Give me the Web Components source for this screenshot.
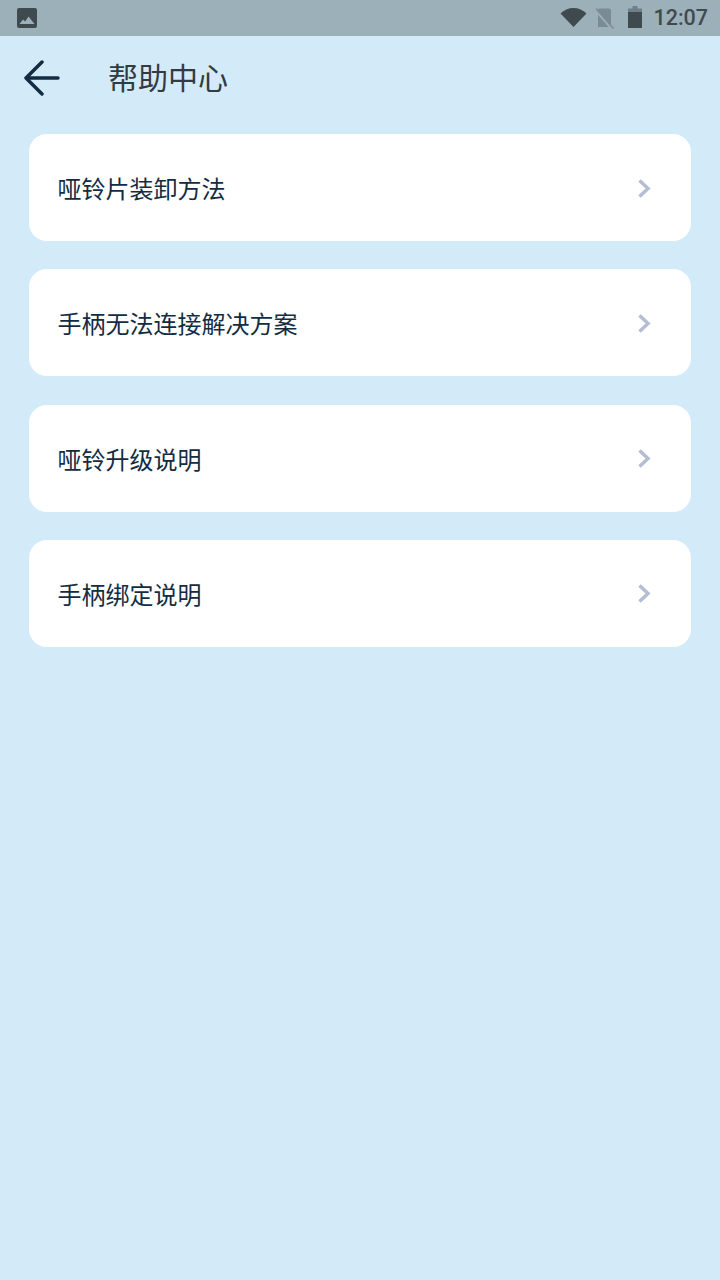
<!DOCTYPE html>
<html lang="zh">
<head>
<meta charset="utf-8">
<title>帮助中心</title>
<style>
    html, body {
        margin: 0;
        height: 100%;
        background-color: #d3ebf9;
        font-family: "Noto Sans CJK SC", "Roboto", sans-serif;
    }
</style>
</head>
<body>
<help-page></help-page>

<script>
class StatusBar extends HTMLElement {
    constructor() {
        super();
        this.shadowDOM = this.attachShadow({ mode: "open" });
        this.shadowDOM.innerHTML = `
            <style>
                :host {
                    display: flex;
                    align-items: center;
                    height: 36px;
                    padding: 0 12px 0 17px;
                    background-color: #9cb0ba;
                    color: #3f4a4f;
                }

                svg {
                    display: block;
                }

                .spacer {
                    flex: 1;
                }

                .wifi {
                    margin: 0 9px 2px 0;
                }

                .sim {
                    margin-right: 14px;
                }

                .battery {
                    margin: 0 11px 2px 0;
                }

                .time {
                    font: 500 21.500px "Roboto", sans-serif;
                    line-height: 36px;
                }
            </style>

            <svg width="20" height="20" viewBox="0 0 20 20">
                <rect x="0" y="0" width="20" height="20" rx="2" fill="#3f4a4f"/>
                <path d="M2.500 16l3.500-4.500 2.200 2 3.300-5 6 7.500z" fill="#9cb0ba"/>
            </svg>
            <span class="spacer"></span>
            <svg class="wifi" width="27" height="20" viewBox="0 0 27 20">
                <path d="M0.500 6.500C4 3 8.500 1 13.500 1s9.500 2 13 5.500L13.500 20z" fill="#3f4a4f"/>
            </svg>
            <svg class="sim" width="18" height="21" viewBox="0 0 18 21">
                <path d="M3.500 0.500h9.500a2 2 0 0 1 2 2v16.500h-13v-17a2 2 0 0 1 1.500-1.500z" fill="#7a8b93"/>
                <path d="M-1 1.500l17.500 20" stroke="#9cb0ba" stroke-width="2.500"/>
                <path d="M0 0.500l17.500 20" stroke="#7a8b93" stroke-width="1.500"/>
            </svg>
            <svg class="battery" width="14" height="22" viewBox="0 0 14 22">
                <path d="M4.500 0h5v2.500h4.500v3.500h-14v-3.500h4.500z" fill="#6f8088"/>
                <path d="M0 6h14v16h-14z" fill="#3f4a4f"/>
            </svg>
            <span class="time">12:07</span>
        `;
    }
}

class TitleBar extends HTMLElement {
    constructor() {
        super();
        this.shadowDOM = this.attachShadow({ mode: "open" });
        this.shadowDOM.innerHTML = `
            <style>
                :host {
                    display: flex;
                    align-items: center;
                    height: 84px;
                    padding-left: 24px;
                }

                svg {
                    display: block;
                    margin-right: 48px;
                }

                .title {
                    font-size: 30px;
                    line-height: 80px;
                    height: 84px;
                    color: #333b40;
                }
            </style>

            <svg width="36" height="36" viewBox="0 0 36 36">
                <path d="M34 18H2M18 2L2 18l16 16" fill="none" stroke="#122c42" stroke-width="3.500" stroke-linecap="round" stroke-linejoin="round"/>
            </svg>
            <span class="title"><slot></slot></span>
        `;
    }
}

class HelpItem extends HTMLElement {
    constructor() {
        super();
        this.shadowDOM = this.attachShadow({ mode: "open" });
        this.shadowDOM.innerHTML = `
            <style>
                :host {
                    display: flex;
                    align-items: center;
                    justify-content: space-between;
                    height: 107px;
                    padding: 0 40px 0 28.500px;
                    background-color: white;
                    border-radius: 18px;
                    color: #122c42;
                    font-size: 24px;
                }

                svg {
                    display: block;
                }
            </style>

            <span><slot></slot></span>
            <svg width="14" height="20" viewBox="0 0 14 20">
                <path d="M2.500 2.500l8.500 8-8.500 8" fill="none" stroke="#b5bdd2" stroke-width="3.500"/>
            </svg>
        `;
    }
}

class HelpPage extends HTMLElement {
    constructor() {
        super();
        this.shadowDOM = this.attachShadow({ mode: "open" });
        const items = ["哑铃片装卸方法", "手柄无法连接解决方案", "哑铃升级说明", "手柄绑定说明"];
        this.shadowDOM.innerHTML = `
            <style>
                :host {
                    display: block;
                    min-height: 1280px;
                    background-color: #d3ebf9;
                }

                .list {
                    display: flex;
                    flex-direction: column;
                    gap: 28.330px;
                    padding: 14px 29px 0;
                }
            </style>

            <status-bar></status-bar>
            <title-bar>帮助中心</title-bar>
            <div class="list">
                ${items.map((text) => `<help-item>${text}</help-item>`).join("")}
            </div>
        `;
    }
}

customElements.define("status-bar", StatusBar);
customElements.define("title-bar", TitleBar);
customElements.define("help-item", HelpItem);
customElements.define("help-page", HelpPage);
</script>
</body>
</html>
